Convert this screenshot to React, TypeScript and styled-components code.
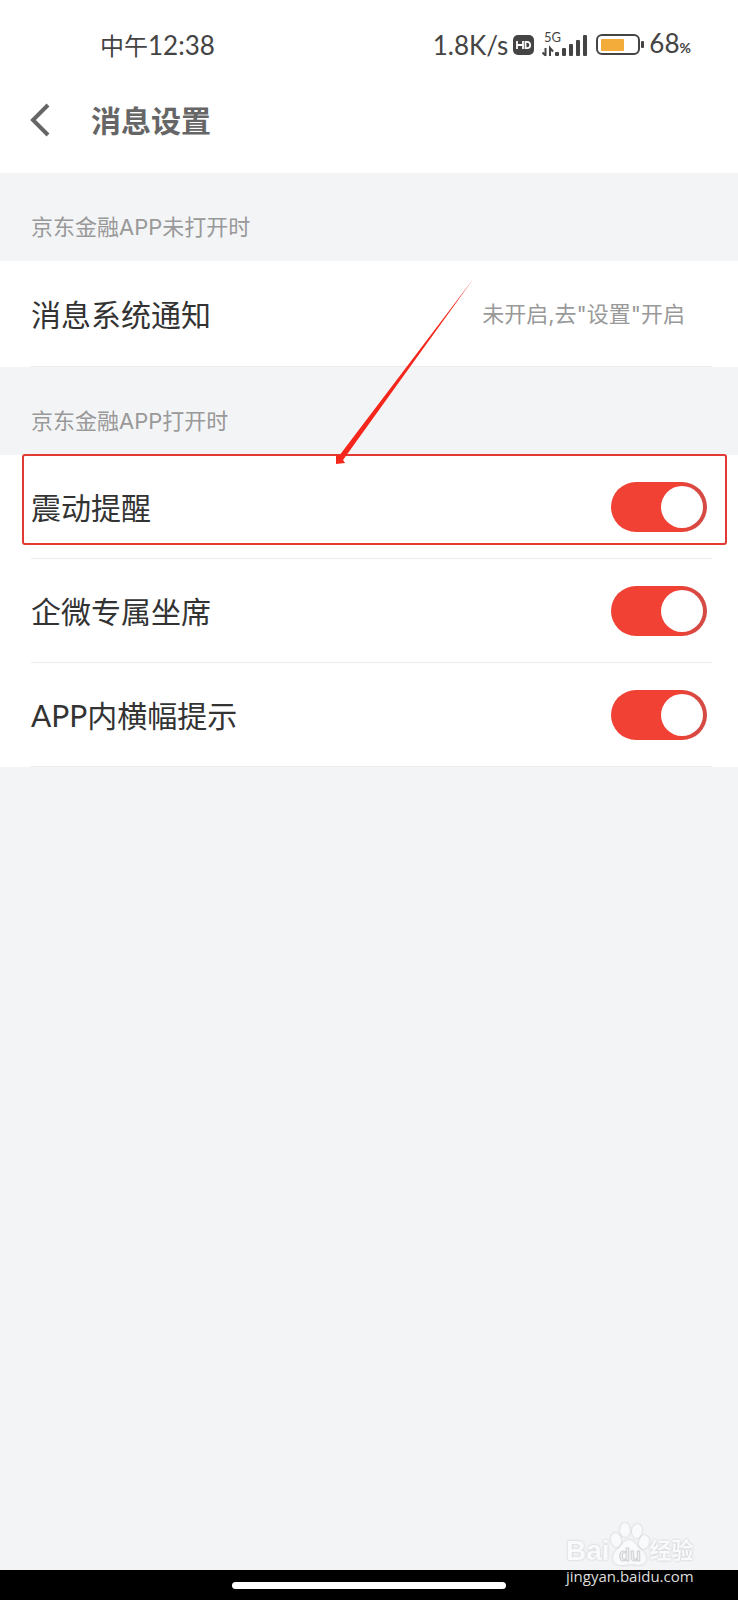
import React, { useState } from "react";
import styled, { createGlobalStyle } from "styled-components";

const GlobalStyle = createGlobalStyle`
  * { box-sizing: border-box; }
  body {
    margin: 0;
    background: #f3f4f6;
    color: #333;
    font-family: Lato, "Noto Sans CJK SC", sans-serif;
  }
  button, input { font: inherit; color: inherit; }
`;

const Screen = styled.div`
  display: flex;
  flex-direction: column;
  min-height: 100vh;
`;

const Top = styled.header`
  background: #fff;
  padding: 28px 30px 31px;
`;

const StatusBar = styled.div`
  display: flex;
  align-items: center;
  justify-content: space-between;
  height: 34px;
  padding: 0 17px 0 70px;
  font-size: 24px;
  line-height: 34px;
  color: #444;
`;

const StatusGroup = styled.div`
  display: flex;
  align-items: center;
  gap: 5px;
`;

const StatusIcons = styled.div`
  display: flex;
  align-items: center;
  gap: 8px;
`;

const Digits = styled.span`
  font-size: 26px;
`;

const Small = styled.span`
  font-size: 14px;
  font-weight: 700;
`;

const TitleBar = styled.div`
  display: flex;
  align-items: center;
  gap: 40px;
  height: 44px;
  margin-top: 36px;
`;

const BackButton = styled.button`
  display: flex;
  padding: 0;
  border: 0;
  background: none;
  color: #666;
`;

const Title = styled.h1`
  margin: 0;
  font-size: 30px;
  line-height: 44px;
  font-weight: 700;
  color: #666;
`;

const Main = styled.main`
  flex: 1;
`;

const SectionTitle = styled.h2`
  margin: 0;
  padding: 38px 31px 18px;
  font-family: Inter, "Noto Sans CJK SC", sans-serif;
  font-size: 22px;
  line-height: 32px;
  font-weight: 400;
  color: #999;
`;

const List = styled.div`
  background: #fff;
`;

const Item = styled.div`
  position: relative;
  padding: 0 26px 0 31px;
`;

const ItemLine = styled.div<{ $height?: number }>`
  display: flex;
  align-items: center;
  justify-content: space-between;
  height: ${(p) => p.$height ?? 104}px;
  border-bottom: 1px solid #ececee;
`;

const ItemLabel = styled.label`
  font-size: 30px;
  line-height: 44px;
`;

const LinkButton = styled.button`
  display: flex;
  flex: 1;
  align-items: center;
  justify-content: space-between;
  padding: 0 27px 0 0;
  border: 0;
  background: none;
  font-size: 30px;
  line-height: 44px;
  text-align: left;
`;

const Hint = styled.span`
  font-family: Inter, "Noto Sans CJK SC", sans-serif;
  font-size: 22px;
  line-height: 32px;
  color: #999;
`;

const Switch = styled.input`
  appearance: none;
  display: flex;
  width: 96px;
  height: 50px;
  margin: 0 5px 0 0;
  padding: 4px;
  border-radius: 25px;
  background: #ccc;

  &::before {
    content: "";
    width: 42px;
    height: 42px;
    border-radius: 50%;
    background: #fff;
  }
  &:checked {
    justify-content: flex-end;
    background: linear-gradient(90deg, #f04134 70%, #d64a44 90%);
  }
`;

const Highlight = styled.div`
  position: absolute;
  inset: -1px 11px 14px 22px;
  border: 2px solid #e23a32;
  border-radius: 3px;
  pointer-events: none;
`;

const Arrow = styled.svg`
  position: absolute;
  right: 263px;
  bottom: 94px;
  pointer-events: none;
`;

const NavBar = styled.footer`
  position: relative;
  display: flex;
  align-items: center;
  justify-content: center;
  height: 30px;
  background: #000;
`;

const HomeIndicator = styled.div`
  width: 37%;
  height: 7px;
  border-radius: 4px;
  background: #fff;
`;

const Watermark = styled.div`
  position: absolute;
  right: 40px;
  bottom: 14px;
  width: 132px;
  color: #f9fafb;
`;

const Brand = styled.div`
  display: flex;
  align-items: flex-end;
  height: 46px;
  filter: drop-shadow(0 0 1px #c4c6ca);
`;

const BrandText = styled.span<{ $size: number }>`
  font-family: "Liberation Sans", "Noto Sans CJK SC", sans-serif;
  font-size: ${(p) => p.$size}px;
  line-height: 30px;
  font-weight: 700;
`;

const Site = styled.div`
  font-family: "Open Sans", sans-serif;
  font-size: 15px;
  line-height: 20px;
  color: #ddd;
`;

const HdIcon = () => (
  <svg width="21" height="20" viewBox="0 0 21 20" aria-hidden="true">
    <rect width="21" height="20" rx="5" fill="#444" />
    <path d="M4 6v8M10 6v8M4 10h6M12.500 6.800v6.400h1.700c4 0 4-6.400 0-6.400z" fill="none" stroke="#fff" strokeWidth="1.800" />
  </svg>
);

const SignalIcon = () => (
  <svg width="46" height="34" viewBox="0 -4 46 34" aria-label="5G">
    <text x="2" y="10" fontSize="13" fill="#444">5G</text>
    <path d="M3.500 16v8M0.500 20.500l3 3M8 24v-8l3 3.500" fill="none" stroke="#444" strokeWidth="2" />
    <g fill="#444">
      <rect x="13" y="20" width="4" height="4" rx="1" />
      <rect x="20" y="16" width="4" height="8" rx="1" />
      <rect x="27" y="12" width="4" height="12" rx="1" />
      <rect x="34" y="8" width="4" height="16" rx="1" />
      <rect x="41" y="3" width="4" height="21" rx="1" />
    </g>
  </svg>
);

const BatteryIcon = () => (
  <svg width="48" height="22" viewBox="0 0 48 22" aria-hidden="true">
    <rect x="1" y="1" width="42" height="19" rx="5" fill="#fff" stroke="#444" strokeWidth="2" />
    <rect x="5" y="5" width="23" height="12" rx="1" fill="#f3ac3a" />
    <rect x="45" y="7" width="3" height="7" rx="1" fill="#444" />
  </svg>
);

const PawIcon = () => (
  <svg width="40" height="44" viewBox="0 0 40 44" aria-hidden="true">
    <g fill="#f9fafb">
      <ellipse cx="6" cy="18" rx="5" ry="7" transform="rotate(-10 6 18)" />
      <ellipse cx="15" cy="8" rx="5" ry="7" />
      <ellipse cx="27" cy="9" rx="5" ry="7" transform="rotate(8 27 9)" />
      <ellipse cx="34" cy="20" rx="5" ry="7" transform="rotate(12 34 20)" />
      <path d="M19 18c-5 0-7 5-10 8-4 3-6 6-6 10 0 5 4 7 8 7 5 0 11-1 17 0 5 0 8-2 8-7 0-4-3-7-7-10-3-3-5-8-10-8z" />
    </g>
    <text x="9" y="39" fontFamily="Liberation Sans" fontSize="18" fontWeight="700" fill="#eceef0" stroke="#d0d2d5" strokeWidth="1">du</text>
  </svg>
);

const Setting = ({ id, label, children }: { id: string; label: string; children?: React.ReactNode }) => {
  const [on, setOn] = useState(true);
  return (
    <Item>
      <ItemLine>
        <ItemLabel htmlFor={id}>{label}</ItemLabel>
        <Switch id={id} type="checkbox" role="switch" checked={on} onChange={() => setOn(!on)} />
      </ItemLine>
      {children}
    </Item>
  );
};

export default function App() {
  return (
    <Screen>
      <GlobalStyle />
      <Top>
        <StatusBar>
          <span>中午<Digits>12:38</Digits></span>
          <StatusGroup>
            <Digits>1.8K/s</Digits>
            <StatusIcons>
              <HdIcon />
              <SignalIcon />
              <BatteryIcon />
            </StatusIcons>
            <Digits>68<Small>%</Small></Digits>
          </StatusGroup>
        </StatusBar>
        <TitleBar>
          <BackButton aria-label="返回">
            <svg width="21" height="34" viewBox="0 0 21 34" aria-hidden="true">
              <path d="M18 2L3 17l15 15" fill="none" stroke="currentColor" strokeWidth="4" />
            </svg>
          </BackButton>
          <Title>消息设置</Title>
        </TitleBar>
      </Top>
      <Main>
        <SectionTitle>京东金融APP未打开时</SectionTitle>
        <List>
          <Item>
            <ItemLine $height={106}>
              <LinkButton>
                消息系统通知
                <Hint>未开启,去"设置"开启</Hint>
              </LinkButton>
            </ItemLine>
          </Item>
        </List>
        <SectionTitle>京东金融APP打开时</SectionTitle>
        <List>
          <Setting id="vibrate" label="震动提醒">
            <Highlight />
            <Arrow width="140" height="188" viewBox="0 0 140 188" aria-hidden="true">
              <path d="M139 1L8 183l2 3-9 1 0-9 3 1z" fill="#f5261b" />
            </Arrow>
          </Setting>
          <Setting id="seat" label="企微专属坐席" />
          <Setting id="banner" label="APP内横幅提示" />
        </List>
      </Main>
      <NavBar>
        <HomeIndicator />
        <Watermark>
          <Brand>
            <BrandText $size={28}>Bai</BrandText>
            <PawIcon />
            <BrandText $size={22}>经验</BrandText>
          </Brand>
          <Site>jingyan.baidu.com</Site>
        </Watermark>
      </NavBar>
    </Screen>
  );
}
